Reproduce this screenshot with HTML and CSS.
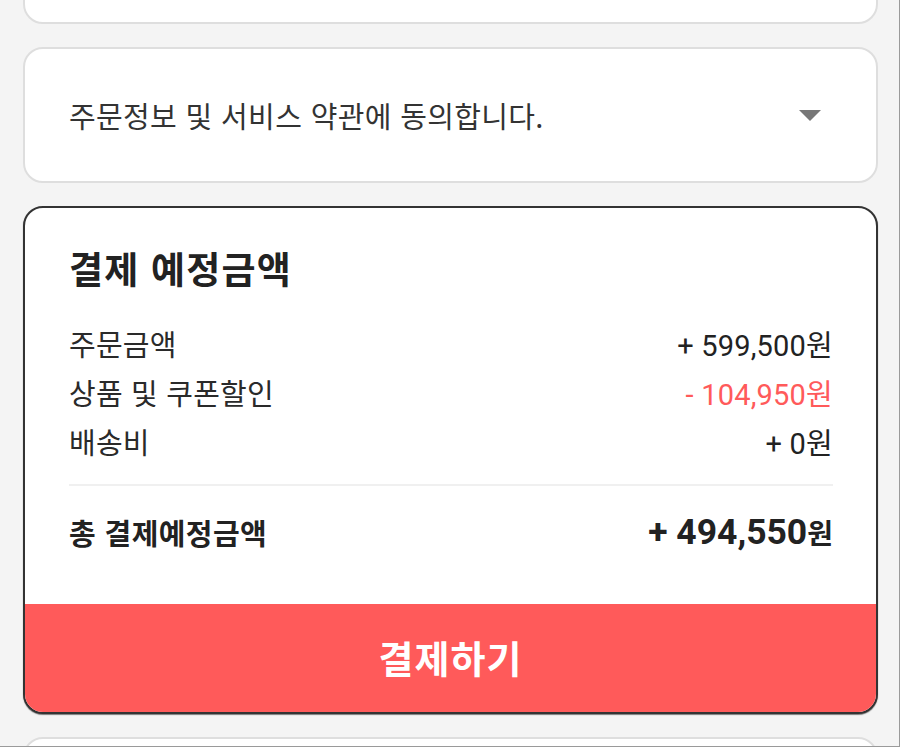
FILE: index.html
```html
<!DOCTYPE html>
<html lang="ko">
<head>
<meta charset="utf-8">
<link rel="stylesheet" href="styles.css">
</head>
<body>
<div class="frame">
  <div class="page">
    <section class="card card-top"></section>
    <section class="card card-agree">
      <span class="agree-text">주문정보 및 서비스 약관에 동의합니다.</span>
      <span class="caret"></span>
    </section>
    <section class="card card-pay">
      <div class="pay-body">
        <h2 class="pay-title">결제 예정금액</h2>
        <div class="rows">
          <div class="row"><span class="label">주문금액</span><span class="amount">+ 599,500<span class="won">원</span></span></div>
          <div class="row"><span class="label">상품 및 쿠폰할인</span><span class="amount discount">- 104,950<span class="won">원</span></span></div>
          <div class="row"><span class="label">배송비</span><span class="amount">+ 0<span class="won">원</span></span></div>
        </div>
        <div class="divider"></div>
        <div class="total">
          <span class="total-label">총 결제예정금액</span>
          <span class="total-amount">+ 494,550<span class="won-total">원</span></span>
        </div>
      </div>
      <button class="pay-btn">결제하기</button>
    </section>
    <section class="card card-bottom"></section>
  </div>
</div>
</body>
</html>
```
FILE: styles.css
```css
* { box-sizing: border-box; }
html, body { margin: 0; padding: 0; }
body {
  background: #f4f4f4;
  font-family: Roboto, "Noto Sans CJK KR", sans-serif;
  color: #2a2a2a;
  overflow: hidden;
}
.frame {
  width: 900px;
  height: 747px;
  overflow: hidden;
  border-right: 1px solid #9a9a9a;
  border-bottom: 1px solid #9a9a9a;
}
.page {
  padding: 0 21px 0 23px;
  display: flex;
  flex-direction: column;
  gap: 23px;
}
.card {
  background: #fff;
  border: 2px solid #dedede;
  border-radius: 20px;
}
.card-top {
  margin-top: -100px;
  height: 124px;
}
.card-agree {
  height: 136px;
  display: flex;
  align-items: center;
  justify-content: space-between;
  padding: 0 55px 0 44px;
}
.agree-text {
  font-family: "Noto Sans CJK KR", sans-serif;
  font-size: 29px;
  color: #333;
  letter-spacing: 0.35px;
}
.caret {
  width: 0;
  height: 0;
  border-left: 11px solid transparent;
  border-right: 11px solid transparent;
  border-top: 11px solid #777;
}
.card-pay {
  border: 2px solid #333;
  box-shadow: 0 1px 1px rgba(0,0,0,0.5);
  overflow: hidden;
  height: 508px;
  display: flex;
  flex-direction: column;
}
.pay-body {
  padding: 35px 43px 0 44px;
  flex: 1;
}
.pay-title {
  margin: 0;
  font-family: "Noto Sans CJK KR", sans-serif;
  font-size: 37px;
  font-weight: 700;
  line-height: 50px;
  color: #222;
  letter-spacing: 1.2px;
}
.rows {
  margin-top: 25px;
}
.row {
  display: flex;
  justify-content: space-between;
  align-items: center;
  height: 49px;
}
.label {
  font-family: "Noto Sans CJK KR", sans-serif;
  font-size: 29px;
  color: #2a2a2a;
  letter-spacing: 0.2px;
}
.amount {
  font-family: Roboto, "Noto Sans CJK KR", sans-serif;
  font-size: 29px;
  color: #222;
  letter-spacing: 0.2px;
}
.won { font-family: "Noto Sans CJK KR", sans-serif; }
.discount { color: #ff5a5a; }
.divider {
  height: 2px;
  background: #f0f0f0;
  margin-top: 19px;
}
.total {
  display: flex;
  justify-content: space-between;
  align-items: center;
  height: 50px;
  margin-top: 21px;
}
.total-label {
  font-family: "Noto Sans CJK KR", sans-serif;
  font-size: 29px;
  font-weight: 700;
  color: #222;
  letter-spacing: 0.4px;
}
.total-amount {
  font-family: Roboto, sans-serif;
  font-weight: 700;
  font-size: 35.5px;
  color: #222;
}
.won-total {
  font-family: "Noto Sans CJK KR", sans-serif;
  font-size: 28px;
  font-weight: 700;
}
.pay-btn {
  display: block;
  width: 100%;
  height: 108px;
  border: 0;
  margin: 0;
  background: #ff5a5a;
  color: #fff;
  font-family: "Noto Sans CJK KR", sans-serif;
  font-size: 38px;
  font-weight: 700;
  letter-spacing: 1px;
  padding: 0 0 4px;
}
.card-bottom {
  height: 60px;
}
```
